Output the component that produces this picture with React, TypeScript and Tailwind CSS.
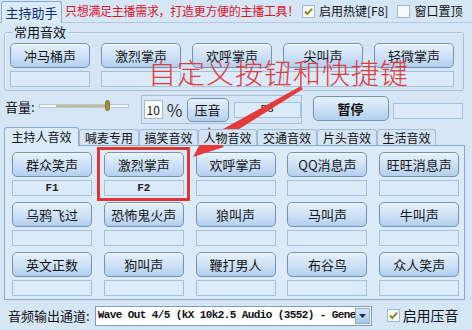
import React from 'react';

const FONT = "font-['Noto_Sans_CJK_SC','Noto_Sans',sans-serif]";

const BTN =
  'w-[80px] h-[25px] shrink-0 rounded-[5px] border border-[#7491b6] bg-linear-to-b from-[#e6f1fd] via-[#cfe2f7] to-[#b3cfee] text-[13px] text-[#161616] flex items-center justify-center leading-none shadow-[inset_0_1px_0_#f6faff]';

const KEY =
  "w-[80px] h-[16px] shrink-0 border border-[#a7c1de] bg-[#dcebfa] text-[11px] font-bold text-[#222] flex items-center justify-center leading-none font-['Liberation_Mono',monospace]";

function Check({ on }: { on?: boolean }) {
  return (
    <span className="w-[13px] h-[13px] shrink-0 border border-[#9fb7d1] bg-[#f7fbff] flex items-center justify-center">
      {on && (
        <svg width="11" height="11" viewBox="0 0 11 11">
          <path d="M2 5.5 L4.3 8 L9.2 2.6" fill="none" stroke="#8c8a1e" strokeWidth="2" />
        </svg>
      )}
    </span>
  );
}

function Cell({ label, keyName }: { label: string; keyName?: string }) {
  return (
    <div className="flex flex-col gap-[3px]">
      <button className={BTN}>{label}</button>
      <div className={KEY}>{keyName}</div>
    </div>
  );
}

const common = ['冲马桶声', '激烈掌声', '欢呼掌声', '尖叫声', '轻微掌声'];
const tabs = [
  { t: '主持人音效', w: 'w-[75px]' },
  { t: '喊麦专用', w: 'w-[60px]' },
  { t: '搞笑音效', w: 'w-[59px]' },
  { t: '人物音效', w: 'w-[59px]' },
  { t: '交通音效', w: 'w-[60px]' },
  { t: '片头音效', w: 'w-[60px]' },
  { t: '生活音效', w: 'w-[59px]' },
];
const grid: [string, string?][] = [
  ['群众笑声', 'F1'],
  ['激烈掌声', 'F2'],
  ['欢呼掌声'],
  ['QQ消息声'],
  ['旺旺消息声'],
  ['乌鸦飞过'],
  ['恐怖鬼火声'],
  ['狼叫声'],
  ['马叫声'],
  ['牛叫声'],
  ['英文正数'],
  ['狗叫声'],
  ['鞭打男人'],
  ['布谷鸟'],
  ['众人笑声'],
];

export default function App() {
  return (
    <div className={`w-[472px] h-[330px] bg-[#d5e6f7] relative overflow-hidden ${FONT} text-[#111]`}>
      {/* top strip */}
      <div className="h-[23px] flex items-end border-b border-[#b4cbe2]">
        <div className="h-[22px] w-[61px] ml-[1px] -mb-px border border-b-0 border-[#8ba9c9] rounded-t-[3px] bg-[#dcebfa] text-[#0c2c7c] text-[13px] flex items-center justify-center">
          主持助手
        </div>
        <div className="h-[22px] flex items-center ml-[3px] text-[#e0121f] text-[12px] tracking-[-0.3px] whitespace-nowrap">
          只想满足主播需求，打造更方便的主播工具！
        </div>
        <div className="h-[22px] flex items-center gap-[4px] ml-[3px] text-[12px] whitespace-nowrap">
          <Check on />
          <span>启用热键[F8]</span>
        </div>
        <div className="h-[22px] flex items-center gap-[4px] ml-[9px] text-[12px] whitespace-nowrap">
          <Check />
          <span>窗口置顶</span>
        </div>
      </div>

      {/* 常用音效 group */}
      <div className="relative mt-[9px] ml-[4px] w-[460px] h-[59px] border border-[#a8c0da] rounded-[3px] shadow-[inset_1px_1px_0_#eef6ff] pl-[5px] pt-[10px]">
        <span className="absolute -top-[9px] left-[7px] px-[2px] bg-[#d5e6f7] text-[13px] leading-[16px]">常用音效</span>
        <div className="flex gap-[11px]">
          {common.map((c) => (
            <Cell key={c} label={c} />
          ))}
        </div>
      </div>

      {/* volume row */}
      <div className="flex items-start mt-[4px] h-[30px]">
        <span className="ml-[5px] mt-[4px] text-[13px] leading-[16px]">音量:</span>
        <div className="relative ml-[4px] mt-[9px] w-[90px] h-[4px] border border-[#b9c8d6] bg-[#f3f7fb]">
          <div className="absolute left-[16px] top-0 h-[2px] w-[50px] bg-[#c4bc94]" />
          <div className="absolute left-[65px] -top-[5px] w-[5px] h-[11px] rounded-full bg-[#9d9233] border border-[#7f7728]" />
        </div>
        <div className="ml-[12px] w-[161px] h-[29px] border border-[#a8c0da] flex items-center pl-[2px] gap-[2px]">
          <div className="w-[20px] h-[19px] bg-white border border-[#9fb7d1] text-[12px] flex items-center justify-center leading-none">10</div>
          <span className="text-[17px] leading-none text-[#333] ml-[2px]">%</span>
          <button className="w-[44px] h-[24px] ml-[2px] rounded-[5px] border border-[#7491b6] bg-linear-to-b from-[#e6f1fd] via-[#cfe2f7] to-[#b3cfee] text-[13px] flex items-center justify-center leading-none">
            压音
          </button>
          <div className="w-[70px] h-[16px] ml-[3px] border border-[#a7c1de] bg-[#dcebfa] text-[11px] flex items-center justify-center leading-none font-['Liberation_Mono',monospace]">
            F3
          </div>
        </div>
        <button className="ml-[11px] mt-[1px] w-[76px] h-[25px] rounded-[5px] border border-[#7491b6] bg-linear-to-b from-[#e6f1fd] via-[#cfe2f7] to-[#b3cfee] text-[13px] font-bold flex items-center justify-center leading-none">
          暂停
        </button>
        <div className="ml-[4px] mt-[8px] w-[70px] h-[16px] border border-[#a7c1de] bg-[#dcebfa]" />
      </div>

      {/* tab bar */}
      <div className="flex items-end h-[18px] mt-[2px] ml-[4px] relative z-10">
        {tabs.map(({ t, w }, i) => (
          <div
            key={t}
            className={
              i === 0
                ? `${w} h-[19px] -mb-px border border-b-0 border-[#8ba9c9] rounded-t-[3px] bg-[#dcebfa] text-[12px] flex items-center justify-center leading-none`
                : `${w} h-[16px] border border-b-0 border-[#a3bdd8] rounded-t-[3px] bg-[#d2e4f6] text-[12px] flex items-center justify-center leading-none`
            }
          >
            {t}
          </div>
        ))}
      </div>

      {/* tab panel */}
      <div className="ml-[4px] w-[461px] h-[155px] border border-[#8ba9c9] bg-[#dcebfa] pl-[7px] pt-[6px]">
        <div className="grid grid-cols-5 gap-x-[11px] gap-y-[6px] w-[448px]">
          {grid.map(([l, k], i) => (
            <Cell key={i} label={l} keyName={k} />
          ))}
        </div>
      </div>

      {/* bottom row */}
      <div className="flex items-center h-[29px] pt-[2px]">
        <span className="ml-[8px] text-[13px]">音频输出通道:</span>
        <div className="ml-[5px] w-[277px] h-[20px] bg-white border border-[#7f9db9] flex items-center pl-[2px] pr-[1px]">
          <span className="flex-1 text-[11px] tracking-[-0.6px] font-bold whitespace-nowrap overflow-hidden font-['Liberation_Mono',monospace] leading-none">
            Wave Out 4/5 (kX 10k2.5 Audio (3552) - Gene
          </span>
          <span className="w-[15px] h-[16px] bg-linear-to-b from-[#d6e6f8] to-[#a9c6ea] border border-[#8eaed4] flex items-center justify-center">
            <svg width="7" height="4" viewBox="0 0 7 4">
              <path d="M0 0 H7 L3.5 4 Z" fill="#1b2b4b" />
            </svg>
          </span>
        </div>
        <div className="ml-[15px] flex items-center gap-[3px] text-[14px]">
          <Check on />
          <span>启用压音</span>
        </div>
      </div>

      {/* annotation overlay */}
      <div className="absolute left-[148px] top-[55px] text-[28px] leading-[34px] text-[#e23b3b] whitespace-nowrap tracking-[1px] font-light">
        自定义按钮和快捷键
      </div>
      <div className="absolute left-[97px] top-[147px] w-[93px] h-[54px] border-[3px] border-[#e23434]" />
      <svg className="absolute left-0 top-0" width="472" height="330" viewBox="0 0 472 330">
        <polygon points="301,86 303,89 220,141 214,134" fill="#e43a3a" />
        <polygon points="193,157 209,127 224,147" fill="#e43a3a" />
      </svg>
    </div>
  );
}
